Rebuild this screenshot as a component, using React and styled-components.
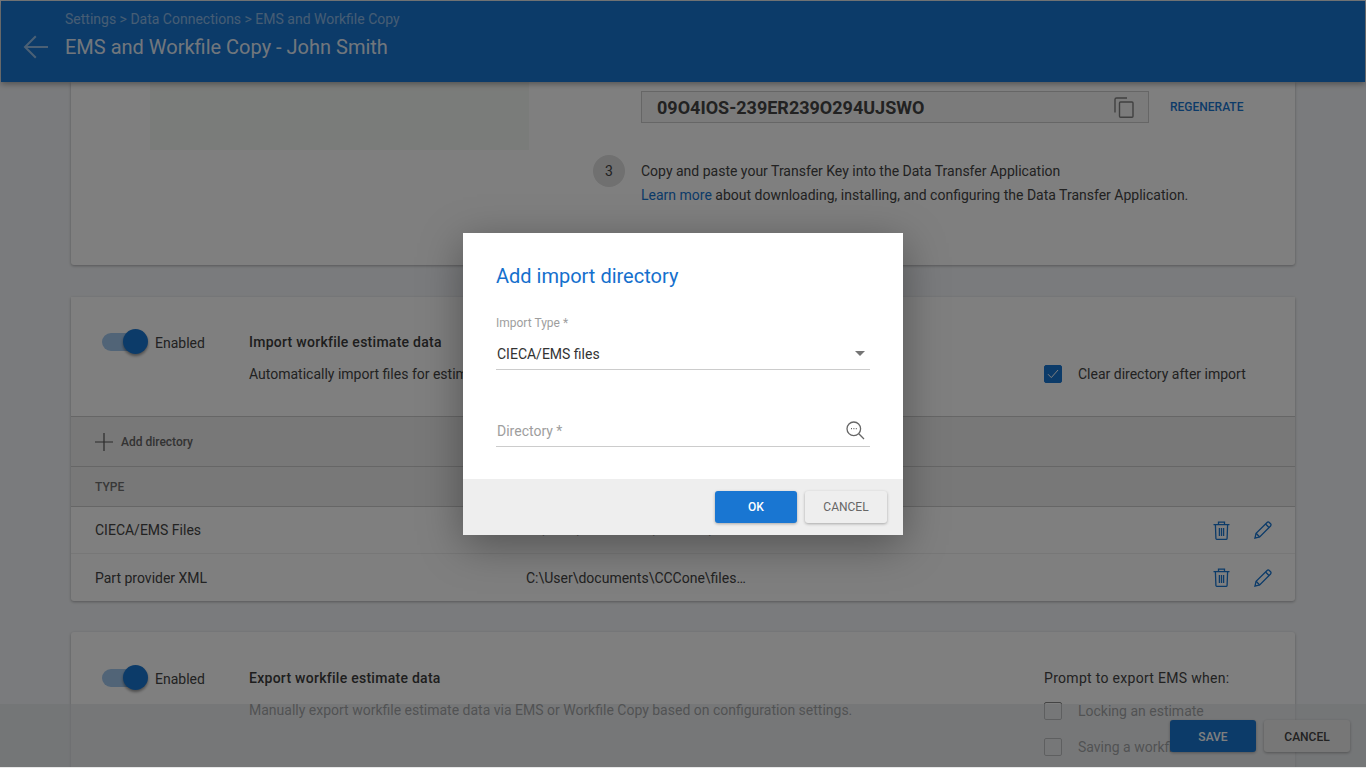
import React from "react";
import styled, { createGlobalStyle } from "styled-components";

const GlobalStyle = createGlobalStyle`
  html, body {
    margin: 0;
    padding: 0;
    background: #e8e8e8;
  }
  * {
    box-sizing: border-box;
  }
  body {
    font-family: Roboto, "Liberation Sans", sans-serif;
    font-size: 14px;
    color: #444;
  }
`;

function BackArrow() {
  return (
    <svg width="25" height="24" viewBox="0 0 25 24" fill="none" stroke="#fff" strokeOpacity="0.55" strokeWidth="2">
      <path d="M25 12H2M12.8 1.2 2 12l10.8 10.8" />
    </svg>
  );
}

function CopyIcon() {
  return (
    <svg width="20" height="21" viewBox="0 0 20 21" fill="none" stroke="#808080" strokeWidth="1.4">
      <path d="M13 1H2.5A1.5 1.5 0 0 0 1 2.5V15.5" />
      <rect x="5.5" y="5" width="13.5" height="15.2" rx="1" />
    </svg>
  );
}

function PlusIcon() {
  return (
    <svg width="18" height="18" viewBox="0 0 18 18" stroke="#555" strokeWidth="1.2">
      <path d="M9 0v18M0 9h18" />
    </svg>
  );
}

function TrashIcon() {
  return (
    <svg width="17" height="19" viewBox="0 0 17 19" fill="none" stroke="#1976d2" strokeWidth="1.3">
      <path d="M.5 3.6h16M5.5 3.3V1.2h6v2.1M2.4 3.8l.5 13.4A1.2 1.2 0 0 0 4.1 18.4h8.8a1.2 1.2 0 0 0 1.2-1.2l.5-13.4" />
      <path d="M6.4 7v8M8.5 7v8M10.6 7v8" />
    </svg>
  );
}

function PencilIcon() {
  return (
    <svg width="18" height="18" viewBox="0 0 19 19" fill="none" stroke="#1976d2" strokeWidth="1.4">
      <path d="M1 18l1.2-5L13.8 1.5a1.6 1.6 0 0 1 2.3 0l1.4 1.4a1.6 1.6 0 0 1 0 2.3L6 16.8 1 18Z" />
      <path d="M2.2 13 6 16.8M12.2 3.2l3.6 3.6" />
    </svg>
  );
}

function CheckIcon() {
  return (
    <svg width="12" height="10" viewBox="0 0 12 10" fill="none" stroke="#fff" strokeWidth="1">
      <path d="M1 5.2 4.3 8.6 11 1" />
    </svg>
  );
}

function LookupIcon() {
  return (
    <svg width="19" height="19" viewBox="0 0 19 19" fill="none" stroke="#666" strokeWidth="1.3">
      <circle cx="7.8" cy="7.8" r="6.8" />
      <path d="M12.8 12.8 18 18" />
      <path d="M5 7.6h1M7.4 7.6h1M9.8 7.6h1" strokeWidth="1.4" />
    </svg>
  );
}

function Switch() {
  return (
    <SwitchWrap>
      <SwitchTrack />
      <SwitchThumb />
    </SwitchWrap>
  );
}

const rows = [
  { type: "CIECA/EMS Files", path: "C:\\User\\documents\\CCCone\\files…" },
  { type: "Part provider XML", path: "C:\\User\\documents\\CCCone\\files…" },
];

export default function App() {
  return (
    <>
      <GlobalStyle />
      <Page>
        <Header>
          <BackButton>
            <BackArrow />
          </BackButton>
          <HeaderText>
            <Breadcrumb>Settings &gt; Data Connections &gt; EMS and Workfile Copy</Breadcrumb>
            <PageTitle>EMS and Workfile Copy - John Smith</PageTitle>
          </HeaderText>
        </Header>

        <Content>
          <KeyCard>
            <Placeholder />
            <KeyColumn>
              <KeyRow>
                <KeyField>
                  <KeyValue>09O4IOS-239ER239O294UJSWO</KeyValue>
                  <CopyIcon />
                </KeyField>
                <TextLink>REGENERATE</TextLink>
              </KeyRow>
              <Step>
                <StepNumber>3</StepNumber>
                <StepText>
                  <div>Copy and paste your Transfer Key into the Data Transfer Application</div>
                  <div>
                    <LearnMore>Learn more</LearnMore> about downloading, installing, and configuring the Data Transfer Application.
                  </div>
                </StepText>
              </Step>
            </KeyColumn>
          </KeyCard>

          <Card>
            <SectionTop>
              <EnabledCell>
                <Switch />
                <EnabledLabel>Enabled</EnabledLabel>
              </EnabledCell>
              <Description>
                <SectionTitle>Import workfile estimate data</SectionTitle>
                <SectionText>Automatically import files for estimates into the selected directories.</SectionText>
              </Description>
              <OptionCell>
                <CheckRow>
                  <Checkbox $checked>
                    <CheckIcon />
                  </Checkbox>
                  <OptionLabel>Clear directory after import</OptionLabel>
                </CheckRow>
              </OptionCell>
            </SectionTop>
            <Toolbar>
              <PlusIcon />
              <span>Add directory</span>
            </Toolbar>
            <TableHead>
              <span>TYPE</span>
            </TableHead>
            {rows.map((row) => (
              <TableRow key={row.type}>
                <TypeCell>{row.type}</TypeCell>
                <PathCell>{row.path}</PathCell>
                <Actions>
                  <TrashIcon />
                  <PencilIcon />
                </Actions>
              </TableRow>
            ))}
          </Card>

          <ExportCard>
            <EnabledCell>
              <Switch />
              <EnabledLabel>Enabled</EnabledLabel>
            </EnabledCell>
            <Description>
              <SectionTitle>Export workfile estimate data</SectionTitle>
              <SectionText>Manually export workfile estimate data via EMS or Workfile Copy based on configuration settings.</SectionText>
            </Description>
            <OptionCell>
              <PromptTitle>Prompt to export EMS when:</PromptTitle>
              <CheckRow>
                <Checkbox />
                <OptionLabel>Locking an estimate</OptionLabel>
              </CheckRow>
              <CheckRow>
                <Checkbox />
                <OptionLabel>Saving a workfile</OptionLabel>
              </CheckRow>
            </OptionCell>
          </ExportCard>
        </Content>

        <Footer>
          <PrimaryButton $width="86px">SAVE</PrimaryButton>
          <SecondaryButton $width="86px" $strong>CANCEL</SecondaryButton>
        </Footer>

        <Scrim>
          <Dialog>
            <DialogBody>
              <DialogTitle>Add import directory</DialogTitle>
              <FieldLabel>Import Type *</FieldLabel>
              <SelectField>
                <span>CIECA/EMS files</span>
                <Caret />
              </SelectField>
              <InputField>
                <span>Directory *</span>
                <LookupIcon />
              </InputField>
            </DialogBody>
            <DialogFooter>
              <PrimaryButton $width="82px">OK</PrimaryButton>
              <SecondaryButton $width="82px">CANCEL</SecondaryButton>
            </DialogFooter>
          </Dialog>
        </Scrim>
      </Page>
    </>
  );
}

const Page = styled.div`
  position: relative;
  width: 1366px;
  height: 767px;
  padding: 1px 1px 0;
  overflow: hidden;
  display: flex;
  flex-direction: column;
  background: #f5f7fa;
`;

const Header = styled.header`
  position: relative;
  z-index: 2;
  flex: none;
  height: 81px;
  display: flex;
  background: #1976d2;
  color: #fff;
  box-shadow: 0 2px 6px rgba(0, 0, 0, 0.35);
`;

const BackButton = styled.div`
  width: 64px;
  padding: 34px 0 0 22px;
`;

const HeaderText = styled.div`
  padding-top: 9px;
`;

const Breadcrumb = styled.div`
  font-size: 14px;
  line-height: 18px;
  color: rgba(255, 255, 255, 0.5);
`;

const PageTitle = styled.div`
  margin-top: 5px;
  font-size: 20px;
  line-height: 28px;
  color: rgba(255, 255, 255, 0.9);
`;

const Content = styled.main`
  flex: 1;
  min-height: 0;
  overflow: hidden;
  padding: 0 70px;
`;

const Card = styled.section`
  margin-bottom: 31px;
  background: #fff;
  border-radius: 0 0 3px 3px;
  box-shadow: 0 1px 3px rgba(0, 0, 0, 0.3);
`;

const KeyCard = styled(Card)`
  height: 183px;
  margin-bottom: 32px;
  padding-left: 79px;
  display: flex;
  gap: 64px;
`;

const Placeholder = styled.div`
  flex: none;
  width: 379px;
  height: 68px;
  background: #f5f8f4;
`;

const KeyColumn = styled.div`
  padding-top: 9px;
`;

const KeyRow = styled.div`
  margin-left: 48px;
  display: flex;
  align-items: center;
  gap: 21px;
`;

const KeyField = styled.div`
  width: 508px;
  height: 32px;
  padding: 0 14px 0 15px;
  display: flex;
  align-items: center;
  justify-content: space-between;
  border: 1px solid #ccc;
  background: #f7f7f7;
`;

const KeyValue = styled.span`
  font-size: 18px;
  font-weight: 700;
  color: #444;
`;

const TextLink = styled.span`
  font-size: 12px;
  font-weight: 500;
  color: #1976d2;
`;

const Step = styled.div`
  margin-top: 32px;
  display: flex;
  gap: 16px;
`;

const StepNumber = styled.div`
  flex: none;
  width: 32px;
  height: 32px;
  border-radius: 50%;
  display: flex;
  align-items: center;
  justify-content: center;
  background: #e0e0e0;
`;

const StepText = styled.div`
  margin-top: 4px;
  line-height: 24px;
`;

const LearnMore = styled.span`
  color: #1976d2;
`;

const SectionTop = styled.div`
  height: 120px;
  display: flex;
  padding-top: 32px;
  border-bottom: 1px solid #ccc;
`;

const ExportCard = styled(Card)`
  height: 200px;
  display: flex;
  padding-top: 33px;
  border-radius: 3px;
`;

const EnabledCell = styled.div`
  flex: none;
  width: 178px;
  height: 25px;
  padding-left: 31px;
  display: flex;
  align-items: center;
  gap: 7px;
`;

const EnabledLabel = styled.span`
  padding-top: 2px;
`;

const SwitchWrap = styled.div`
  position: relative;
  width: 46px;
  height: 25px;
`;

const SwitchTrack = styled.div`
  position: absolute;
  top: 4px;
  left: 0;
  width: 38px;
  height: 18px;
  border-radius: 9px;
  background: #a3c8ee;
`;

const SwitchThumb = styled.div`
  position: absolute;
  top: 0;
  right: 0;
  width: 25px;
  height: 25px;
  border-radius: 50%;
  background: #1976d2;
  box-shadow: 0 2px 3px rgba(0, 0, 0, 0.4);
`;

const Description = styled.div`
  flex: none;
  width: 795px;
`;

const SectionTitle = styled.div`
  line-height: 26px;
  font-weight: 500;
  letter-spacing: 0.27px;
  color: #3c3c3c;
`;

const SectionText = styled.div`
  margin-top: 6px;
  line-height: 26px;
`;

const OptionCell = styled.div`
  flex: 1;
  min-width: 0;
`;

const PromptTitle = styled.div`
  height: 28px;
  line-height: 26px;
  letter-spacing: 0.3px;
`;

const CheckRow = styled.div`
  height: 36px;
  display: flex;
  align-items: center;
  gap: 16px;
  white-space: nowrap;
  ${SectionTop} & {
    margin-top: 27px;
  }
`;

const Checkbox = styled.div`
  flex: none;
  width: 18px;
  height: 18px;
  border-radius: 2px;
  display: flex;
  align-items: center;
  justify-content: center;
  background: ${(p) => (p.$checked ? "#1976d2" : "transparent")};
  border: 1px solid ${(p) => (p.$checked ? "#1976d2" : "#888")};
`;

const OptionLabel = styled.span`
  color: #444;
`;

const Toolbar = styled.div`
  height: 50px;
  padding-left: 24px;
  display: flex;
  align-items: center;
  gap: 8px;
  background: #f0f0f0;
  border-bottom: 1px solid #ccc;
  font-size: 12px;
  font-weight: 500;
  color: #666;
`;

const TableHead = styled.div`
  height: 40px;
  padding-left: 24px;
  display: flex;
  align-items: center;
  background: #f0f0f0;
  border-bottom: 1px solid #ccc;
  font-size: 12px;
  font-weight: 500;
  color: #707070;
`;

const TableRow = styled.div`
  height: 47px;
  padding: 0 23px 0 24px;
  display: flex;
  align-items: center;
  border-bottom: 1px solid #eee;
  &:last-child {
    border-bottom: 0;
  }
`;

const TypeCell = styled.div`
  width: 431px;
`;

const PathCell = styled.div`
  flex: 1;
`;

const Actions = styled.div`
  display: flex;
  align-items: center;
  gap: 24px;
`;

const Footer = styled.footer`
  position: absolute;
  left: 0;
  right: 0;
  bottom: 0;
  height: 63px;
  padding: 16px 16px 0 0;
  display: flex;
  justify-content: flex-end;
  gap: 8px;
  background: rgba(225, 228, 232, 0.6);
  & > * {
    padding-top: 1px;
  }
`;

const ButtonBase = styled.div`
  width: ${(p) => p.$width};
  height: 32px;
  border-radius: 3px;
  display: flex;
  align-items: center;
  justify-content: center;
  font-size: 12px;
  font-weight: 500;
  box-shadow: 0 1px 3px rgba(0, 0, 0, 0.3);
`;

const PrimaryButton = styled(ButtonBase)`
  background: #1976d2;
  color: #fff;
`;

const SecondaryButton = styled(ButtonBase)`
  background: #eee;
  color: ${(p) => (p.$strong ? "#444" : "#666")};
  font-weight: ${(p) => (p.$strong ? 500 : 400)};
`;

const Scrim = styled.div`
  position: absolute;
  inset: 0;
  z-index: 5;
  padding-top: 1px;
  display: flex;
  align-items: center;
  justify-content: center;
  background: rgba(0, 0, 0, 0.5);
`;

const Dialog = styled.div`
  width: 440px;
  height: 302px;
  display: flex;
  flex-direction: column;
  background: #fff;
  box-shadow: 0 10px 40px rgba(0, 0, 0, 0.35);
`;

const DialogBody = styled.div`
  flex: 1;
  padding: 29px 33px 0;
`;

const DialogTitle = styled.h2`
  margin: 0;
  font-size: 20px;
  font-weight: 400;
  line-height: 28px;
  color: #1570cd;
`;

const FieldLabel = styled.div`
  margin-top: 25px;
  font-size: 12px;
  line-height: 16px;
  color: #9e9e9e;
`;

const SelectField = styled.div`
  height: 39px;
  padding: 7px 5px 0 1px;
  display: flex;
  align-items: center;
  justify-content: space-between;
  border-bottom: 1px solid #ccc;
  color: #333;
`;

const Caret = styled.div`
  width: 0;
  height: 0;
  border-left: 5px solid transparent;
  border-right: 5px solid transparent;
  border-top: 5px solid #757575;
`;

const InputField = styled.div`
  margin-top: 38px;
  height: 39px;
  padding: 7px 5px 0 1px;
  display: flex;
  align-items: center;
  justify-content: space-between;
  border-bottom: 1px solid #ccc;
  color: #9e9e9e;
`;

const DialogFooter = styled.div`
  flex: none;
  height: 56px;
  padding: 12px 16px 0 0;
  display: flex;
  justify-content: flex-end;
  gap: 8px;
  background: #eee;
`;
